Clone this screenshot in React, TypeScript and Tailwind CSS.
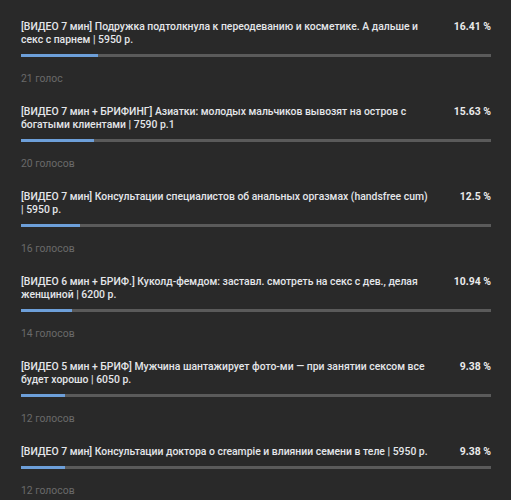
const options = [
  {
    title: "[ВИДЕО 7 мин] Подружка подтолкнула к переодеванию и косметике. А дальше и секс с парнем | 5950 р.",
    percent: 16.41,
    votes: "21 голос",
  },
  {
    title: "[ВИДЕО 7 мин + БРИФИНГ] Азиатки: молодых мальчиков вывозят на остров с богатыми клиентами | 7590 р.1",
    percent: 15.63,
    votes: "20 голосов",
  },
  {
    title: "[ВИДЕО 7 мин] Консультации специалистов об анальных оргазмах (handsfree cum) | 5950 р.",
    percent: 12.5,
    votes: "16 голосов",
  },
  {
    title: "[ВИДЕО 6 мин + БРИФ.] Куколд-фемдом: заставл. смотреть на секс с дев., делая женщиной | 6200 р.",
    percent: 10.94,
    votes: "14 голосов",
  },
  {
    title: "[ВИДЕО 5 мин + БРИФ] Мужчина шантажирует фото-ми — при занятии сексом все будет хорошо | 6050 р.",
    percent: 9.38,
    votes: "12 голосов",
  },
  {
    title: "[ВИДЕО 7 мин] Консультации доктора о creampie и влиянии семени в теле | 5950 р.",
    percent: 9.38,
    votes: "12 голосов",
  },
];

function PollOption({ title, percent, votes }: { title: string; percent: number; votes: string }) {
  return (
    <div className="pb-[20px]">
      <div className="flex items-start gap-3">
        <div className="flex-1 text-[10.4px] leading-[13px] font-medium text-[#e4e6e9]">{title}</div>
        <div className="w-[51px] shrink-0 text-right text-[10.4px] leading-[13px] font-bold text-[#ebebeb]">
          {percent} %
        </div>
      </div>
      <div className="mt-[8px] h-[3px] bg-[#5a5a5a]">
        <div className="h-full bg-[#6d9fd9]" style={{ width: `${percent}%` }} />
      </div>
      <div className="mt-[15px] text-[10.4px] leading-[13px] text-[#6a6a6a]">{votes}</div>
    </div>
  );
}

export default function App() {
  return (
    <div
      className="w-[511px] h-[500px] overflow-hidden bg-[#292929] pl-[21px] pr-[20px] pt-[20px]"
      style={{ fontFamily: "Roboto, 'Liberation Sans', sans-serif" }}
    >
      {options.map((o, i) => (
        <PollOption key={i} {...o} />
      ))}
    </div>
  );
}
